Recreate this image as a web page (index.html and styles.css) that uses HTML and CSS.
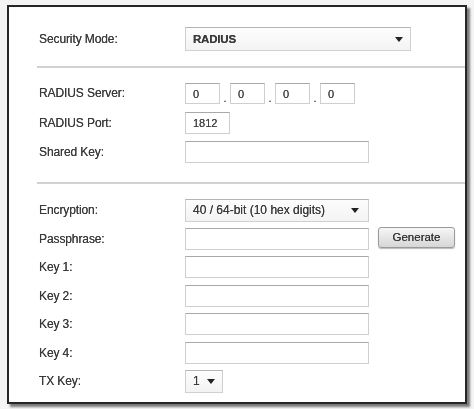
FILE: index.html
```html
<!DOCTYPE html>
<html>
<head>
<meta charset="utf-8">
<link rel="stylesheet" href="styles.css">
</head>
<body>
<div class="frame">
  <div class="section first">
    <div class="label">Security Mode:</div>
    <div class="select wide"><span>RADIUS</span><i class="arrow"></i></div>
  </div>
  <div class="divider"></div>
  <div class="section second">
    <div class="label">RADIUS Server:</div>
    <div class="ip">
      <div class="box ipbox">0</div><span class="dot">.</span>
      <div class="box ipbox">0</div><span class="dot">.</span>
      <div class="box ipbox">0</div><span class="dot">.</span>
      <div class="box ipbox">0</div>
    </div>
    <div class="label">RADIUS Port:</div>
    <div><div class="box port">1812</div></div>
    <div class="label">Shared Key:</div>
    <div><div class="box field"></div></div>
  </div>
  <div class="divider d2"></div>
  <div class="section third">
    <div class="label">Encryption:</div>
    <div class="select enc"><span>40 / 64-bit (10 hex digits)</span><i class="arrow"></i></div>
    <div class="label">Passphrase:</div>
    <div class="withbtn"><div class="box field"></div><div class="btn">Generate</div></div>
    <div class="label">Key 1:</div>
    <div><div class="box field"></div></div>
    <div class="label">Key 2:</div>
    <div><div class="box field"></div></div>
    <div class="label">Key 3:</div>
    <div><div class="box field"></div></div>
    <div class="label">Key 4:</div>
    <div><div class="box field"></div></div>
    <div class="label">TX Key:</div>
    <div class="select tx"><span>1</span><i class="arrow"></i></div>
  </div>
</div>
</body>
</html>
```

FILE: styles.css
```css
html, body {
  margin: 0;
  padding: 0;
  background: #f4f4f4;
}
body {
  width: 474px;
  height: 409px;
  overflow: hidden;
  font-family: "Liberation Sans", Arial, sans-serif;
}
.frame {
  box-sizing: border-box;
  margin: 5px 0 0 7px;
  width: 460px;
  height: 399px;
  border: 2px solid #262626;
  background: #fff;
  box-shadow: 3px 3px 2px #7a7a7a;
  filter: blur(0.55px);
  color: #3c3c3c;
  font-size: 12px;
  text-shadow: 0 0 0.6px #444;
}
.section {
  display: grid;
  grid-template-columns: 146px 1fr;
  padding-left: 30px;
  align-items: center;
}
.first {
  margin-top: 20px;
  grid-auto-rows: 24px;
}
.second {
  margin-top: 14px;
  grid-auto-rows: 22px;
  row-gap: 7.5px;
}
.third {
  margin-top: 15px;
  grid-auto-rows: 22px;
  row-gap: 6.5px;
}
.label {
  color: #3a3a3a;
  letter-spacing: -0.1px;
}
.divider {
  margin: 15px 0 0 28px;
  height: 2px;
  background: #cfd3d8;
}
.d2 {
  margin-top: 19px;
}
.box {
  box-sizing: border-box;
  height: 22px;
  border: 1px solid #cfcfcf;
  border-top-color: #a9a9a9;
  background: #fff;
  padding: 4px 0 0 7px;
  font-size: 11px;
  color: #444;
}
.field {
  width: 184px;
}
.port {
  width: 45px;
}
.ip {
  display: flex;
  align-items: flex-end;
  height: 21px;
}
.ipbox {
  width: 35px;
  height: 21px;
}
.dot {
  width: 10px;
  text-align: center;
  font-size: 11px;
  line-height: 12px;
  color: #666;
}
.select {
  box-sizing: border-box;
  display: flex;
  align-items: center;
  justify-content: space-between;
  height: 23px;
  border: 1px solid #d0d0d0;
  border-top-color: #b5b5b5;
  background: linear-gradient(#fdfdfd, #f3f3f3);
  padding: 0 7px 0 7px;
  color: #3a3a3a;
}
.select.wide {
  width: 226px;
  height: 24px;
  font-weight: bold;
  font-size: 11.5px;
  letter-spacing: -0.2px;
}
.select.enc {
  width: 184px;
  font-size: 12px;
  padding-right: 9px;
}
.select.tx {
  width: 38px;
}
.arrow {
  width: 0;
  height: 0;
  border-left: 4px solid transparent;
  border-right: 4px solid transparent;
  border-top: 5px solid #222;
}
.withbtn {
  display: flex;
  align-items: center;
  gap: 9px;
}
.btn {
  box-sizing: border-box;
  width: 77px;
  height: 21px;
  margin-top: -2px;
  border: 1px solid #9a9a9a;
  border-radius: 3px;
  background: linear-gradient(#f6f6f6, #d6d6d6);
  text-align: center;
  line-height: 19px;
  font-size: 11.5px;
  color: #333;
  box-shadow: 0 1px 1px #bbb;
}
```
